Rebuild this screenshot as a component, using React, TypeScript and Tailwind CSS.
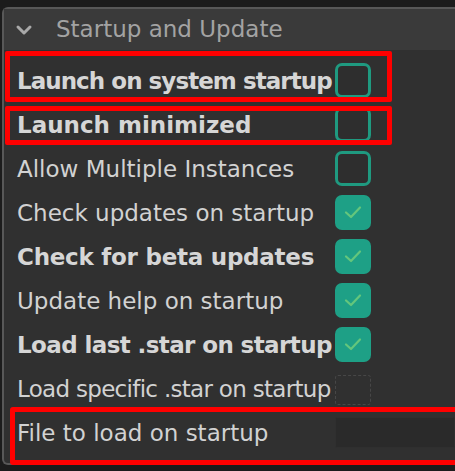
import React from "react";

type Row = { label: string; bold?: boolean; kind: "off" | "on" | "dashed" | "input"; track?: string };

const rows: Row[] = [
  { label: "Launch on system startup", bold: true, kind: "off", track: "tracking-[-0.95px]" },
  { label: "Launch minimized", bold: true, kind: "off" },
  { label: "Allow Multiple Instances", kind: "off" },
  { label: "Check updates on startup", kind: "on" },
  { label: "Check for beta updates", bold: true, kind: "on", track: "tracking-[-0.25px]" },
  { label: "Update help on startup", kind: "on" },
  { label: "Load last .star on startup", bold: true, kind: "on", track: "tracking-[-0.6px]" },
  { label: "Load specific .star on startup", kind: "dashed", track: "tracking-[-0.7px]" },
  { label: "File to load on startup", kind: "input" },
];

function Control({ kind }: { kind: Row["kind"] }) {
  if (kind === "off")
    return <div className="w-[36px] h-[35px] rounded-[7px] border-[3px] border-[#1f9a80] bg-[#2e2e2e]" />;
  if (kind === "on")
    return (
      <div className="w-[36px] h-[35px] rounded-[7px] bg-[#1ea086] flex items-center justify-center">
        <svg width="20" height="16" viewBox="0 0 20 16">
          <path d="M3 8.5 L8 13 L17 3.5" fill="none" stroke="#64c67c" strokeWidth="2.2" strokeLinecap="round" strokeLinejoin="round" />
        </svg>
      </div>
    );
  if (kind === "dashed")
    return <div className="w-[36px] h-[30px] mt-[4px] rounded-[3px] border border-dashed border-[#474747]" />;
  return <div className="flex-1 h-[31px] bg-[#2a2a2a] border border-[#2f2f2f] rounded-[2px]" />;
}

export default function App() {
  return (
    <div
      className="relative w-[455px] h-[471px] bg-[#1c1c1c] overflow-hidden pt-[7px] pl-[2px]"
      style={{ fontFamily: '"DejaVu Sans", Verdana, sans-serif' }}
    >
      <div className="h-[458px] bg-[#303030] border-t-2 border-l-2 border-b-2 border-[#585858] rounded-l-[6px] flex flex-col">
        <div className="h-[41px] bg-[#3a3a3a] flex items-center pl-[11px]">
          <svg width="18" height="12" viewBox="0 0 18 12" className="mr-[23px]">
            <path d="M3 3 L9 9 L15 3" fill="none" stroke="#a9a9a9" strokeWidth="3" strokeLinecap="round" strokeLinejoin="round" />
          </svg>
          <span className="text-[23px] text-[#a3a3a3] leading-none">Startup and Update</span>
        </div>
        <div className="flex flex-col pt-[8px]">
          {rows.map((r) => (
            <div key={r.label} className="h-[44px] flex items-center pl-[13px]">
              <span
                className={
                  (r.bold
                    ? "w-[318px] text-[23px] font-bold text-[#d6d6d6] whitespace-nowrap leading-none mt-[3px] "
                    : "w-[318px] text-[23px] text-[#d2d2d2] whitespace-nowrap leading-none mt-[3px] ") + (r.track ?? "")
                }
              >
                {r.label}
              </span>
              <Control kind={r.kind} />
            </div>
          ))}
        </div>
      </div>
      <div className="absolute left-[5px] top-[51px] w-[387px] h-[51px] border-[5px] border-[#ff0000] rounded-[2px]" />
      <div className="absolute left-[5px] top-[106px] w-[387px] h-[39px] border-[5px] border-[#ff0000] rounded-[2px]" />
      <div className="absolute left-[10px] top-[407px] w-[460px] h-[58px] border-[5px] border-[#ff0000] rounded-[3px]" />
    </div>
  );
}
